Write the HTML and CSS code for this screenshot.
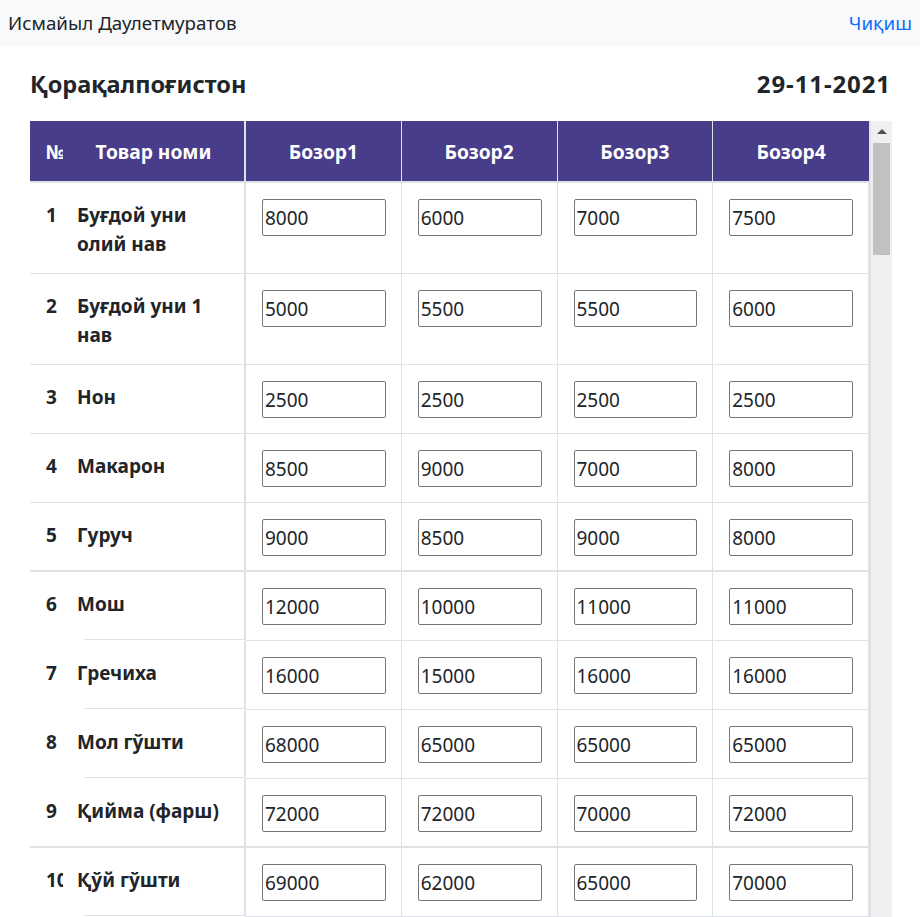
FILE: index.html
```html
<!DOCTYPE html>
<html lang="uz">
<head>
<meta charset="utf-8">
<title>Нархлар</title>
<link rel="stylesheet" href="styles.css">
</head>
<body>
<nav class="navbar">
  <span class="user">Исмайыл Даулетмуратов</span>
  <a class="logout" href="#">Чиқиш</a>
</nav>
<main class="main">
  <div class="title-row">
    <h1 class="region">Қорақалпоғистон</h1>
    <div class="date">29-11-2021</div>
  </div>
  <div class="table-area">
    <div class="table-wrap">
      <table class="prices">
        <colgroup>
          <col class="c-num"><col class="c-name"><col><col><col><col>
        </colgroup>
        <thead>
          <tr>
            <th class="num">№</th>
            <th class="name">Товар номи</th>
            <th class="bz">Бозор1</th>
            <th class="bz">Бозор2</th>
            <th class="bz">Бозор3</th>
            <th class="bz last">Бозор4</th>
          </tr>
        </thead>
        <tbody>
          <tr>
            <td class="num">1</td><td class="name">Буғдой уни олий нав</td>
            <td class="bz"><input value="8000"></td><td class="bz"><input value="6000"></td><td class="bz"><input value="7000"></td><td class="bz last"><input value="7500"></td>
          </tr>
          <tr>
            <td class="num">2</td><td class="name">Буғдой уни 1 нав</td>
            <td class="bz"><input value="5000"></td><td class="bz"><input value="5500"></td><td class="bz"><input value="5500"></td><td class="bz last"><input value="6000"></td>
          </tr>
          <tr>
            <td class="num">3</td><td class="name">Нон</td>
            <td class="bz"><input value="2500"></td><td class="bz"><input value="2500"></td><td class="bz"><input value="2500"></td><td class="bz last"><input value="2500"></td>
          </tr>
          <tr>
            <td class="num">4</td><td class="name">Макарон</td>
            <td class="bz"><input value="8500"></td><td class="bz"><input value="9000"></td><td class="bz"><input value="7000"></td><td class="bz last"><input value="8000"></td>
          </tr>
          <tr class="thick">
            <td class="num">5</td><td class="name">Гуруч</td>
            <td class="bz"><input value="9000"></td><td class="bz"><input value="8500"></td><td class="bz"><input value="9000"></td><td class="bz last"><input value="8000"></td>
          </tr>
          <tr class="gap">
            <td class="num">6</td><td class="name">Мош</td>
            <td class="bz"><input value="12000"></td><td class="bz"><input value="10000"></td><td class="bz"><input value="11000"></td><td class="bz last"><input value="11000"></td>
          </tr>
          <tr class="gap">
            <td class="num">7</td><td class="name">Гречиха</td>
            <td class="bz"><input value="16000"></td><td class="bz"><input value="15000"></td><td class="bz"><input value="16000"></td><td class="bz last"><input value="16000"></td>
          </tr>
          <tr class="gap">
            <td class="num">8</td><td class="name">Мол гўшти</td>
            <td class="bz"><input value="68000"></td><td class="bz"><input value="65000"></td><td class="bz"><input value="65000"></td><td class="bz last"><input value="65000"></td>
          </tr>
          <tr class="thick">
            <td class="num">9</td><td class="name">Қийма (фарш)</td>
            <td class="bz"><input value="72000"></td><td class="bz"><input value="72000"></td><td class="bz"><input value="70000"></td><td class="bz last"><input value="72000"></td>
          </tr>
          <tr class="gap">
            <td class="num">10</td><td class="name">Қўй гўшти</td>
            <td class="bz"><input value="69000"></td><td class="bz"><input value="62000"></td><td class="bz"><input value="65000"></td><td class="bz last"><input value="70000"></td>
          </tr>
          <tr>
            <td class="num">11</td><td class="name">Товуқ гўшти</td>
            <td class="bz"><input value="30000"></td><td class="bz"><input value="30000"></td><td class="bz"><input value="30000"></td><td class="bz last"><input value="30000"></td>
          </tr>
        </tbody>
      </table>
    </div>
    <div class="scrollbar">
      <div class="arrow-up"></div>
      <div class="thumb"></div>
    </div>
  </div>
</main>
</body>
</html>
```

FILE: styles.css
```css
html, body {
  margin: 0;
  height: 917px;
  overflow: hidden;
}
body {
  font-family: "Noto Sans", "Open Sans", sans-serif;
  color: #212529;
  background: #fff;
}
.navbar {
  display: flex;
  justify-content: space-between;
  align-items: center;
  height: 46px;
  background: #f8f9fa;
  padding: 0 8px;
  font-size: 18.8px;
}
.logout {
  color: #0d6efd;
  text-decoration: none;
}
.main {
  padding: 0 28px 0 30px;
}
.title-row {
  display: flex;
  justify-content: space-between;
  align-items: center;
  height: 75px;
  padding-right: 2px;
}
.region, .date {
  margin: 0;
  font-size: 23.5px;
  font-weight: 700;
}
.date {
  font-size: 24px;
  letter-spacing: 0.9px;
  margin-right: -1px;
}
.table-area {
  display: flex;
  height: 800px;
}
.table-wrap {
  flex: 1;
  overflow: hidden;
  border-right: 2px solid #dee2e6;
}
.prices {
  width: 100%;
  table-layout: fixed;
  border-collapse: separate;
  border-spacing: 0;
  font-size: 19px;
}
.c-num { width: 33px; }
.c-name { width: 183px; }
.prices th {
  height: 62px;
  box-sizing: border-box;
  background: #483d8b;
  color: #fff;
  font-weight: 700;
  font-size: 19.2px;
  text-align: center;
  border-bottom: 2px solid #dee2e6;
  padding: 0;
}
.prices th.num {
  text-align: left;
  padding-left: 16px;
  overflow: hidden;
  white-space: nowrap;
}
.prices th.name {
  border-right: 2px solid #dee2e6;
}
.prices th.bz {
  border-right: 1px solid #dee2e6;
}
.prices th.last, .prices td.last {
  border-right: none;
}
.prices td {
  vertical-align: top;
  line-height: 29px;
  border-bottom: 1px solid #dee2e6;
  font-weight: 700;
}
.prices td.num {
  padding: 18px 0 14px 16px;
  overflow: hidden;
  white-space: nowrap;
}
.prices td.name {
  padding: 18px 14px 14px;
  border-right: 2px solid #dee2e6;
}
.prices td.bz {
  padding: 16px 15px 15px 16px;
  border-right: 1px solid #dee2e6;
}
.prices tr.thick td {
  border-bottom-width: 2px;
}
.prices tr.thick td.bz {
  padding-bottom: 14px;
}
.prices tr.gap td.num {
  border-bottom-color: #fff;
}
.prices tr.gap td.name {
  border-bottom-color: transparent;
  background: linear-gradient(#dee2e6, #dee2e6) no-repeat right bottom / calc(100% - 21px) 1px;
}
.prices input {
  display: block;
  width: 100%;
  height: 37px;
  box-sizing: border-box;
  border: 1px solid #767676;
  border-radius: 2px;
  padding: 0 2px;
  font-family: "Noto Sans", "Open Sans", sans-serif;
  font-size: 19px;
  color: #212529;
  background: #fff;
}
.scrollbar {
  width: 21px;
  background: #f0f0f0;
  display: flex;
  flex-direction: column;
  align-items: center;
}
.arrow-up {
  width: 0;
  height: 0;
  margin-top: 8px;
  border-left: 5px solid transparent;
  border-right: 5px solid transparent;
  border-bottom: 5px solid #505050;
}
.thumb {
  margin-top: 9px;
  width: 17px;
  height: 112px;
  background: #c1c1c1;
}
```
